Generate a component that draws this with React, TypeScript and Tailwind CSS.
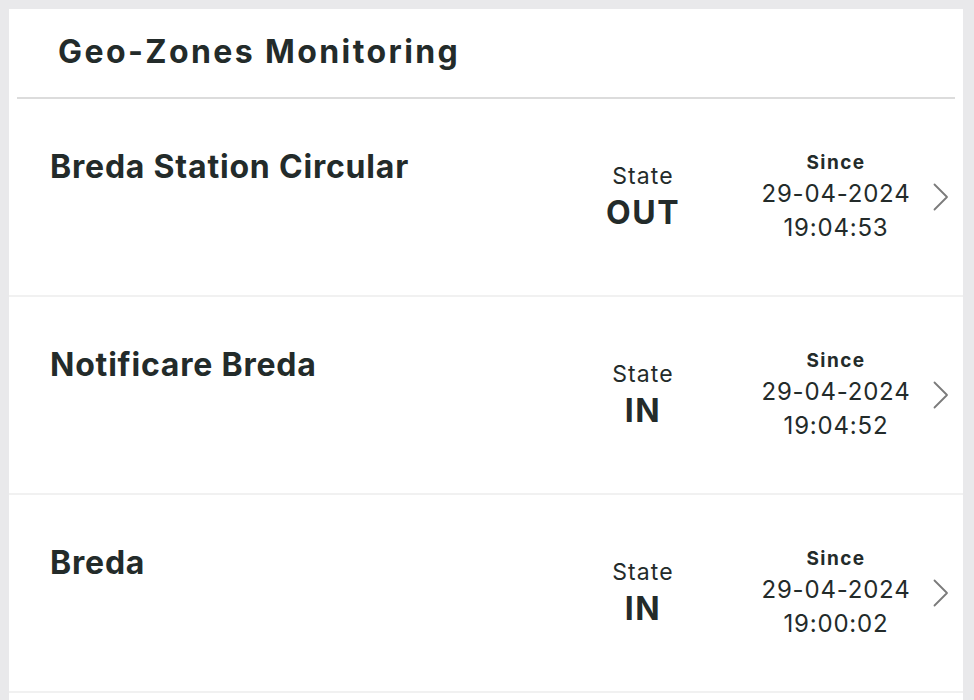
type Zone = {
    name: string;
    state: string;
    date: string;
    time: string;
};

const zones: Zone[] = [
    {name: "Breda Station Circular", state: "OUT", date: "29-04-2024", time: "19:04:53"},
    {name: "Notificare Breda", state: "IN", date: "29-04-2024", time: "19:04:52"},
    {name: "Breda", state: "IN", date: "29-04-2024", time: "19:00:02"},
];

function Chevron() {
    return (
        <svg width="16" height="28" viewBox="0 0 16 28" fill="none">
            <polyline points="1.5,1.5 14,14 1.5,26.5" stroke="#7b7b7b" strokeWidth="1.8" strokeLinecap="round" strokeLinejoin="round" />
        </svg>
    );
}

function ZoneRow({zone}: {zone: Zone}) {
    return (
        <div className="flex items-stretch h-[198px] border-b-2 border-[#f1f1f1] pl-[41px] pr-[14px]">
            <div className="flex-1 pt-[48px] text-[32px] leading-[40px] font-bold tracking-[0.8px] text-[#232b2a]">
                {zone.name}
            </div>
            <div className="flex items-center w-[124px] justify-center">
                <div className="flex flex-col items-center text-[#232b2a]">
                    <span className="text-[23px] leading-[28px] tracking-[1.1px]">State</span>
                    <span className="mt-[3px] text-[32px] leading-[40px] font-bold tracking-[1.6px]">{zone.state}</span>
                </div>
            </div>
            <div className="flex items-center w-[160px] ml-[51px] justify-center">
                <div className="flex flex-col items-center text-[#232b2a]">
                    <span className="text-[19px] leading-[28px] font-bold tracking-[1.4px]">Since</span>
                    <span className="text-[24px] leading-[34px] tracking-[0.8px]">{zone.date}</span>
                    <span className="text-[24px] leading-[34px] tracking-[0.8px]">{zone.time}</span>
                </div>
            </div>
            <div className="flex items-center ml-[17px]">
                <Chevron />
            </div>
        </div>
    );
}

export default function App() {
    return (
        <div
            className="min-h-[700px] bg-[#e9e9eb] pt-[9px] pl-[9px] pr-[11px]"
            style={{fontFamily: "Inter, 'Liberation Sans', sans-serif"}}
        >
            <div className="bg-white h-[691px] overflow-hidden">
                <div className="mx-[8px] h-[90px] border-b-2 border-[#dcdcdc] flex items-center pl-[41px] pb-[2px]">
                    <h1 className="text-[32px] font-bold tracking-[2.4px] text-[#232b2a]">Geo-Zones Monitoring</h1>
                </div>
                {zones.map((zone) => (
                    <ZoneRow key={zone.name} zone={zone} />
                ))}
            </div>
        </div>
    );
}
